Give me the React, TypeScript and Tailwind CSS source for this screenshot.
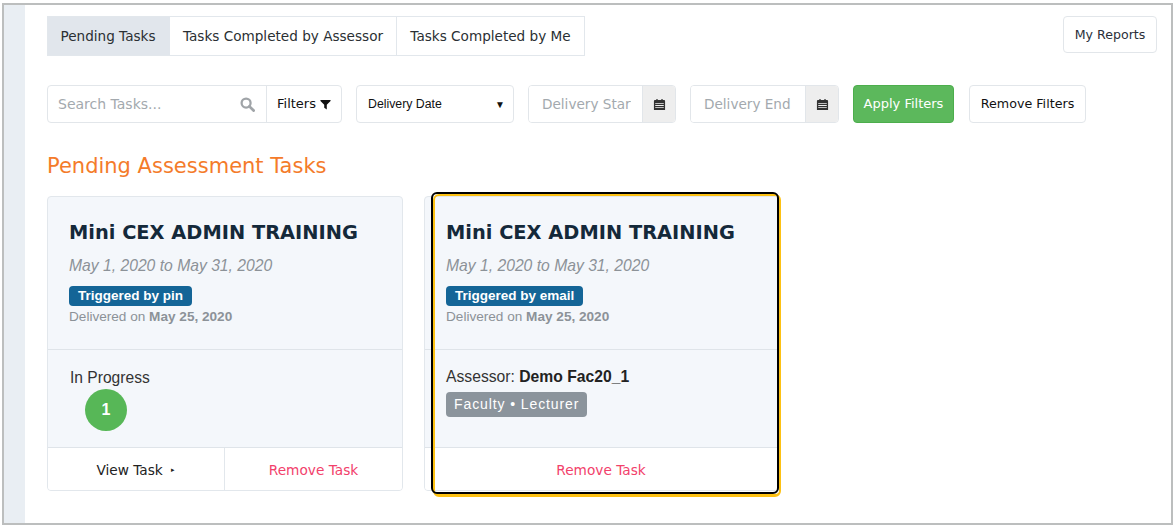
function SearchIcon() {
  return (
    <svg viewBox="0 0 16 16" className="w-[15px] h-[15px]">
      <circle cx="6.5" cy="6.5" r="4.8" fill="none" stroke="#a0a4a8" strokeWidth="2.4" />
      <path d="M10 10l4.5 4.5" stroke="#a0a4a8" strokeWidth="3" strokeLinecap="round" />
    </svg>
  );
}

function FilterIcon() {
  return (
    <svg viewBox="0 0 12 12" className="w-[11px] h-[11px] fill-[#111]">
      <path d="M0.5 1h11v1.2L7.4 6.4V11.5L4.6 9.6V6.4L0.5 2.2z" />
    </svg>
  );
}

function CalendarIcon() {
  return (
    <svg viewBox="0 0 14 14" className="w-[13px] h-[13px] fill-[#333]">
      <path d="M1 3.2a1 1 0 0 1 1-1h1.6V1h1.4v1.2h4V1h1.4v1.2H12a1 1 0 0 1 1 1V13H1z" />
      <path d="M2.4 5.6h9.2v.9H2.4zM2.4 7.6h9.2v.9H2.4zM2.4 9.6h9.2v.9H2.4z" className="fill-[#f0f0f0]" />
    </svg>
  );
}

function DateInput({ label, width, inputWidth }: { label: string; width: string; inputWidth: string }) {
  return (
    <div className={`flex h-[38px] rounded border border-[#e2e6ea] overflow-hidden ${width}`}>
      <input
        placeholder={label}
        className={`pl-[13px] pr-[11px] bg-white outline-none text-[13.6px] placeholder:text-[#a3a9ae] ${inputWidth}`}
      />
      <div className="flex-1 flex items-center justify-center bg-[#eeeeee] border-l border-[#e2e6ea]">
        <CalendarIcon />
      </div>
    </div>
  );
}

function TaskCard({ trigger, body, footer }: { trigger: string; body: React.ReactNode; footer: React.ReactNode }) {
  return (
    <div className="w-[356px] h-[295px] flex flex-col rounded border border-[#e2e7ec] bg-[#f4f7fb] overflow-hidden">
      <div className="h-[153px] border-b border-[#dfe4e9] pl-[21px] pt-[22px]">
        <h3 className="text-[19.4px] leading-[28px] font-bold text-[#14293a]">Mini CEX ADMIN TRAINING</h3>
        <p className="mt-[9px] font-['Liberation_Sans',sans-serif] italic text-[15.7px] leading-[20px] text-[#8c9298]">May 1, 2020 to May 31, 2020</p>
        <span className="mt-[10px] block w-fit h-[20px] rounded bg-[#146597] px-[9px] font-['Liberation_Sans',sans-serif] font-bold text-[13.5px] leading-[20px] text-white">{trigger}</span>
        <p className="font-['Liberation_Sans',sans-serif] text-[13.6px] leading-[21px] text-[#8c9298]">
          Delivered on <b>May 25, 2020</b>
        </p>
      </div>
      <div className="h-[98px] border-b border-[#dfe4e9] pl-[21px] font-['Liberation_Sans',sans-serif]">{body}</div>
      <div className="flex-1 flex bg-white text-[13.7px]">{footer}</div>
    </div>
  );
}

export default function App() {
  return (
    <div className="w-[1176px] h-[528px] bg-white pl-[2px] pt-[3px] pr-[3px] pb-[3px] font-['DejaVu_Sans',sans-serif]">
      <div className="h-full border-2 border-[#bcbebe] flex">
        <div className="w-[21px] flex-none bg-[#e9eef3]" />
        <main className="flex-1 pl-[22px] pr-[14px] pt-[11px] min-w-0">
          <div className="flex justify-between items-start">
            <div className="flex h-[40px] border border-[#e2e7ec] text-[13.6px] text-[#2a2f33]">
              <div className="w-[122px] pr-[2px] flex items-center justify-center bg-[#e1e6ec]">Pending Tasks</div>
              <div className="w-[227px] flex items-center justify-center border-r border-[#e2e7ec]">Tasks Completed by Assessor</div>
              <div className="w-[187px] flex items-center justify-center">Tasks Completed by Me</div>
            </div>
            <button className="w-[94px] h-[37px] pt-[1px] rounded border border-[#e2e6ea] bg-white text-[12.6px] text-[#2a2f3a]">My Reports</button>
          </div>

          <div className="flex gap-[14px] mt-[29px] text-[#111]">
            <div className="flex w-[295px] h-[38px] rounded border border-[#e2e6ea]">
              <div className="w-[218px] flex items-center justify-between pl-[10px] pr-[11px]">
                <input placeholder="Search Tasks..." className="w-[170px] outline-none text-[14px] placeholder:text-[#a3a9ae]" />
                <SearchIcon />
              </div>
              <div className="flex-1 flex items-center justify-center gap-[4px] border-l border-[#e2e6ea] text-[13px]">
                Filters
                <FilterIcon />
              </div>
            </div>
            <div className="flex w-[158px] h-[38px] items-center justify-between rounded border border-[#e2e6ea] pl-[11px] pr-[8px] font-['Liberation_Sans',sans-serif] text-[12.3px]">
              Delivery Date
              <span className="text-[10px]">▼</span>
            </div>
            <DateInput label="Delivery Start" width="w-[148px]" inputWidth="w-[113px]" />
            <DateInput label="Delivery End" width="w-[149px]" inputWidth="w-[114px]" />
            <button className="w-[101px] h-[38px] rounded border border-[#4cae4c] bg-[#5cb85c] text-white text-[13px]">Apply Filters</button>
            <button className="w-[117px] h-[38px] ml-[1px] rounded border border-[#e2e6ea] bg-white text-[12.7px]">Remove Filters</button>
          </div>

          <h2 className="mt-[26px] h-[34px] text-[21px] leading-[34px] text-[#f47b2a]">Pending Assessment Tasks</h2>

          <div className="flex gap-[21px] mt-[13px]">
            <TaskCard
              trigger="Triggered by pin"
              body={
                <>
                  <p className="pt-[18px] text-[15.6px] leading-[20px] text-[#333] pl-[1px]">In Progress</p>
                  <div className="ml-[16px] mt-[1px] w-[42px] h-[42px] rounded-full bg-[#57b757] flex items-center justify-center font-bold text-[16px] text-white">1</div>
                </>
              }
              footer={
                <>
                  <button className="w-[177px] pt-[2px] pr-[1px] border-r border-[#e2e7ec] text-[#222]">View Task <span className="ml-[4px] text-[7px] align-middle">▸</span></button>
                  <button className="flex-1 pt-[2px] text-[#f2416b]">Remove Task</button>
                </>
              }
            />
            <div className="relative">
              <TaskCard
                trigger="Triggered by email"
                body={
                  <>
                    <p className="pt-[17px] text-[15.7px] leading-[20px] text-[#333]">Assessor: <b className="text-[#222]">Demo Fac20_1</b></p>
                    <span className="mt-[5px] block w-fit h-[25px] rounded bg-[#8b949c] px-[8px] text-[14px] leading-[25px] tracking-[0.9px] text-white">Faculty • Lecturer</span>
                  </>
                }
                footer={<button className="flex-1 pt-[2px] pr-[2px] text-[#f2416b]">Remove Task</button>}
              />
              {/* highlight drawn over the card */}
              <div className="absolute left-[9px] top-[-2px] w-[348px] h-[303px] rounded-[6px] border-2 border-b-[3px] border-[#fdc113]" />
              <div className="absolute left-[7px] top-[-4px] w-[348px] h-[302px] rounded-[6px] border-2 border-black" />
            </div>
          </div>
        </main>
      </div>
    </div>
  );
}
